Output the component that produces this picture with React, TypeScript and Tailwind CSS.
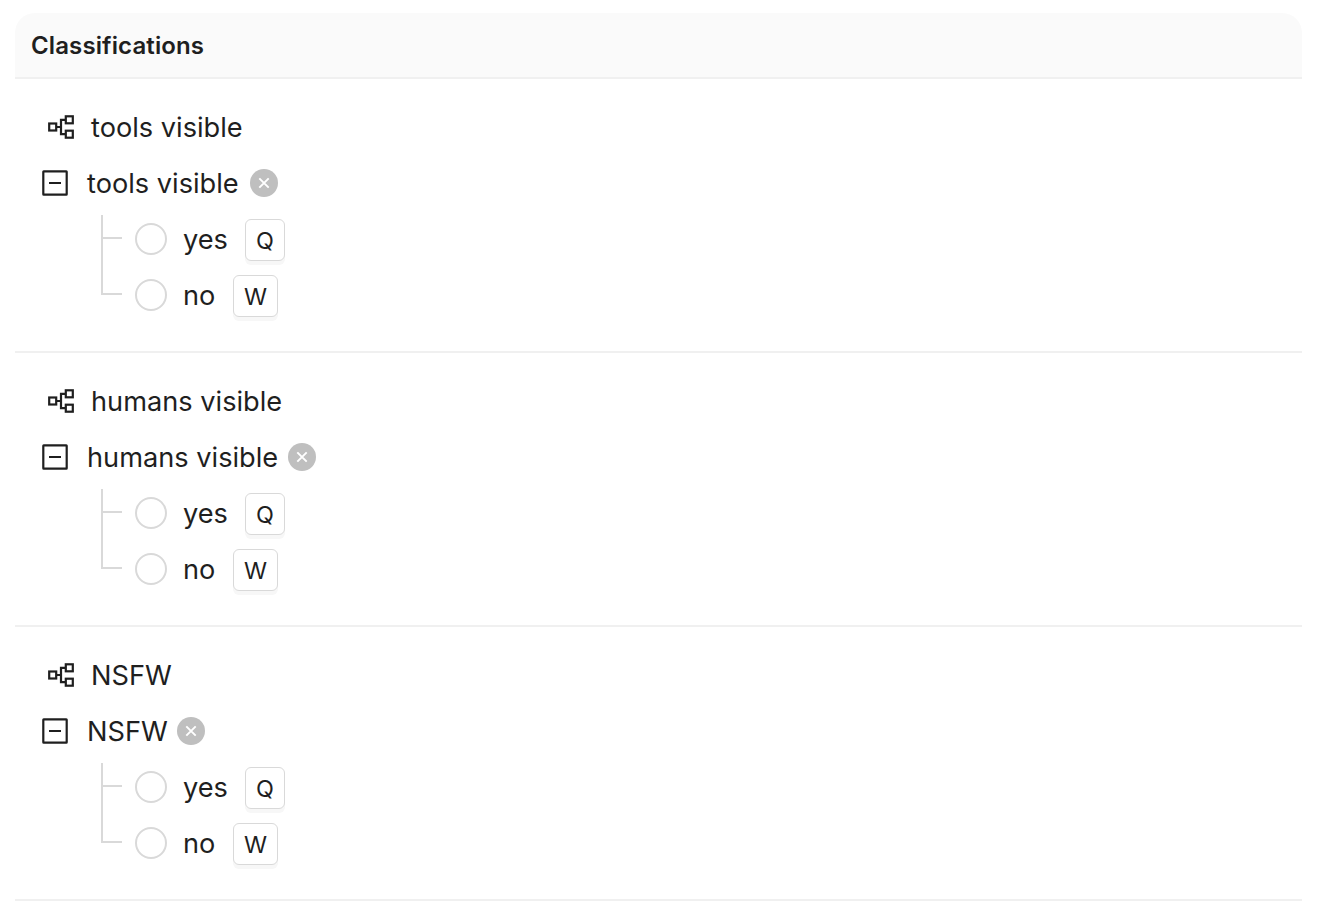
type Classification = { name: string; labelWidth: string };

const classifications: Classification[] = [
  { name: "tools visible", labelWidth: "w-[163px]" },
  { name: "humans visible", labelWidth: "w-[201px]" },
  { name: "NSFW", labelWidth: "w-[90px]" },
];

function HierarchyIcon() {
  return (
    <svg width="28" height="28" viewBox="0 0 28 28" fill="none" stroke="#1f1f1f" strokeWidth="2.2" className="shrink-0">
      <rect x="2.2" y="10.5" width="7" height="7" />
      <rect x="18.8" y="3.3" width="7" height="7" />
      <rect x="18.8" y="17.7" width="7" height="7" />
      <path d="M9.3 14h4.7M18 6.8h-4v14.4h4" />
    </svg>
  );
}

function CollapseIcon() {
  return (
    <svg width="26" height="26" viewBox="0 0 26 26" fill="none" stroke="#1f1f1f" strokeWidth="2.2" className="shrink-0">
      <rect x="1.3" y="1.3" width="23.4" height="23.4" rx="0.4" />
      <path d="M7 13h12" strokeWidth="2" />
    </svg>
  );
}

function ClearIcon() {
  return (
    <svg width="28" height="28" viewBox="0 0 28 28" fill="none" className="shrink-0">
      <circle cx="14" cy="14" r="14" fill="#bfbfbf" />
      <path d="M9.3 9.3l9.4 9.4M18.7 9.3l-9.4 9.4" stroke="#fff" strokeWidth="1.9" />
    </svg>
  );
}

function TreeLine({ last }: { last?: boolean }) {
  return (
    <svg width="22" height="56" viewBox="0 0 22 56" fill="none" stroke="#d9d9d9" strokeWidth="2" className="shrink-0">
      <path d={last ? "M2 0V27H22" : "M2 4V56M2 27H22"} />
    </svg>
  );
}

function Option({ label, hotkey, last }: { label: string; hotkey: string; last?: boolean }) {
  return (
    <div className="flex h-14 items-center pl-[85px]">
      <TreeLine last={last} />
      <span className="ml-[13px] size-8 shrink-0 rounded-full border-2 border-[#d9d9d9] bg-white" />
      <span className={last ? "mt-0.5 ml-4 w-[50px]" : "mt-0.5 ml-4 w-[62px]"}>{label}</span>
      <kbd
        className={`mt-[2px] flex h-[42px] items-center justify-center rounded-md border border-[#d9d9d9] bg-white pt-px font-[Inter,sans-serif] text-[23.4px] shadow-[0_4px_0_#f7f7f7] ${last ? "w-[45px]" : "w-10"}`}
      >
        {hotkey}
      </kbd>
    </div>
  );
}

export default function App() {
  return (
    <main className="h-[918px] overflow-hidden bg-white pt-[13px] pr-[18px] pl-[15px] font-[Inter,sans-serif] text-[27.2px] leading-[56px] font-[430] text-[#1f1f1f]">
      <header className="flex h-[66px] items-center rounded-t-[20px] border-b-2 border-[#f0f0f0] bg-[#fafafa] pt-0.5 pl-4">
        <h1 className="text-2xl font-semibold tracking-[0.12px]">Classifications</h1>
      </header>
      {classifications.map(({ name, labelWidth }) => (
        <section key={name} className="h-[274px] border-b-2 border-[#f0f0f0] pt-5">
          <div className="flex h-14 items-center pl-8">
            <HierarchyIcon />
            <span className="mt-0.5 ml-4 whitespace-nowrap">{name}</span>
          </div>
          <div className="flex h-14 items-center pl-[27px]">
            <CollapseIcon />
            <span className={`mt-0.5 ml-[19px] shrink-0 whitespace-nowrap ${labelWidth}`}>{name}</span>
            <ClearIcon />
          </div>
          <Option label="yes" hotkey="Q" />
          <Option label="no" hotkey="W" last />
        </section>
      ))}
    </main>
  );
}
